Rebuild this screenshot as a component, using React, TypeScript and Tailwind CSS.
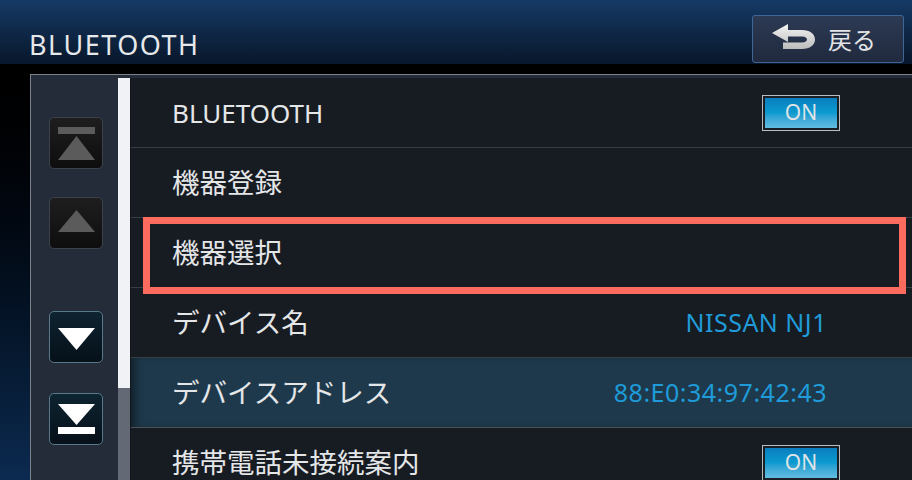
import type React from "react"

// Bluetooth settings screen (car navigation)

const FONT = { fontFamily: '"Noto Sans", "Noto Sans CJK JP", sans-serif' }

function ScrollButton({ kind, active }: { kind: "top" | "up" | "down" | "bottom"; active: boolean }) {
  const fill = active ? "#ffffff" : "#5b5b5b"
  return (
    <div
      className={`w-[54px] h-[52px] rounded-[5px] border ${
        active
          ? "border-[#56798c] bg-gradient-to-b from-[#0e2431] to-[#061019]"
          : "border-[#3b4149] bg-gradient-to-b from-[#1e1e1f] to-[#0e0e0f]"
      }`}
    >
      <svg width="52" height="50" viewBox="0 0 52 50">
        {kind === "top" && (
          <>
            <rect x="8" y="9" width="37" height="7" fill={fill} />
            <polygon points="8,42 45,42 26.5,18" fill={fill} />
          </>
        )}
        {kind === "up" && <polygon points="8,34 45,34 26.5,12" fill={fill} />}
        {kind === "down" && <polygon points="8,16 45,16 26.5,38" fill={fill} />}
        {kind === "bottom" && (
          <>
            <polygon points="8,10 45,10 26.5,31" fill={fill} />
            <rect x="8" y="33" width="37" height="7" fill={fill} />
          </>
        )}
      </svg>
    </div>
  )
}

function OnButton() {
  return (
    <div className="w-[78px] h-[36px] border border-[#b9bdc2] bg-[#1a1f25] p-[2px]">
      <div className="w-full h-full bg-gradient-to-b from-[#0a7dbf] via-[#0c9bd0] to-[#62bde0] flex items-center justify-center">
        <span className="text-[21px] leading-none text-[#dfe3e6]" style={FONT}>
          ON
        </span>
      </div>
    </div>
  )
}

interface RowProps {
  label: string
  latin?: boolean
  value?: string
  toggle?: boolean
  highlight?: boolean
  selected?: boolean
}

function Row({ label, latin, value, toggle, highlight, selected }: RowProps) {
  return (
    <div
      className={`relative h-[70px] shrink-0 flex items-center pl-[41px] border-b ${
        highlight
          ? "bg-[#1e394b] border-[#4d5258] shadow-[inset_8px_0_8px_-4px_rgba(0,0,0,0.45)]"
          : "border-[#393e45]"
      }`}
    >
      <span
        className={`flex-1 text-[#e4e6e8] leading-none ${latin ? "text-[26px]" : "text-[27.5px]"}`}
        style={FONT}
      >
        {label}
      </span>
      {toggle && (
        <div className="mr-[72px]">
          <OnButton />
        </div>
      )}
      {value && (
        <span className="mr-[85px] text-[25px] tracking-[0.5px] text-[#1f9bd9] leading-none" style={FONT}>
          {value}
        </span>
      )}
      {/* 선택 표시 (빨간 테두리) */}
      {selected && (
        <div className="absolute left-[12px] right-[6px] top-[-1px] h-[77px] border-[7px] border-[#fd6b5e] pointer-events-none" />
      )}
    </div>
  )
}

function BackIcon() {
  return (
    <svg width="44" height="30" viewBox="0 0 44 30">
      <defs>
        <linearGradient id="bk" x1="0" y1="0" x2="0" y2="1">
          <stop offset="0" stopColor="#f4f4f4" />
          <stop offset="1" stopColor="#bdbdbd" />
        </linearGradient>
      </defs>
      <path
        d="M0 9 L16 0 L16 6 L30 6 C38 6 43 10 43 15.5 C43 21 38 25 30 25 L11 25 L11 18.5 L30 18.5 C33.5 18.5 35 17 35 15.5 C35 14 33.5 12.5 30 12.5 L16 12.5 L16 18 Z"
        fill="url(#bk)"
      />
    </svg>
  )
}

export default function App() {
  return (
    <div className="w-[912px] h-[480px] overflow-hidden flex flex-col bg-gradient-to-b from-[#000000] via-[#020a15] to-[#0c2a50]" style={FONT}>
      {/* 헤더 */}
      <div className="h-[64px] shrink-0 flex items-center justify-between bg-gradient-to-b from-[#163a67] to-[#08172b] pl-[29px] pr-[8px]">
        <span className="text-[27px] text-[#e6e8ea] tracking-[1.5px] mt-[25px] leading-none">BLUETOOTH</span>
        <div className="w-[152px] h-[48px] mt-[14px] rounded-[3px] border border-[#3f6696] bg-gradient-to-b from-[#2d3a54] to-[#202a3e] flex items-center pl-[19px] gap-[12px]">
          <BackIcon />
          <span className="text-[24px] text-[#e2e4e6] leading-none" style={{ fontFamily: '"Noto Sans CJK JP", sans-serif' }}>
            戻る
          </span>
        </div>
      </div>

      {/* 본문 패널 */}
      <div className="flex-1 pl-[30px] pt-[10px]">
        <div className="h-full flex border-t border-l border-[#7d828a] bg-[#232c38] pt-[3px]">
          <div className="w-[87px] shrink-0 flex flex-col pl-[18px] pt-[39px]">
            <ScrollButton kind="top" active={false} />
            <div className="mt-[28px]">
              <ScrollButton kind="up" active={false} />
            </div>
            <div className="mt-[62px]">
              <ScrollButton kind="down" active />
            </div>
            <div className="mt-[30px]">
              <ScrollButton kind="bottom" active />
            </div>
          </div>
          {/* 스크롤바 */}
          <div className="w-[13px] shrink-0 flex flex-col bg-[#646a75] border-r border-[#12161c]">
            <div className="h-[310px] bg-[#f1f2f5]" />
          </div>
          <div className="flex-1 flex flex-col bg-[#171b22] overflow-hidden">
            <Row label="BLUETOOTH" latin toggle />
            <Row label="機器登録" />
            <Row label="機器選択" selected />
            <Row label="デバイス名" value="NISSAN NJ1" />
            <Row label="デバイスアドレス" value="88:E0:34:97:42:43" highlight />
            <Row label="携帯電話未接続案内" toggle />
          </div>
        </div>
      </div>
    </div>
  )
}
